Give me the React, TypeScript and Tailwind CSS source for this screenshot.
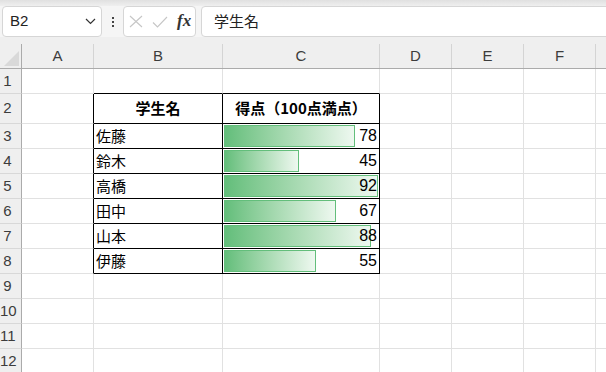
import React from "react";

const JP = "font-['Noto_Sans_CJK_JP','Noto_Sans_CJK_SC',sans-serif]";
const LS = "font-['Liberation_Sans',Arial,sans-serif]";

const data = [
  { name: "佐藤", v: 78, w: 131 },
  { name: "鈴木", v: 45, w: 75 },
  { name: "高橋", v: 92, w: 154 },
  { name: "田中", v: 67, w: 112 },
  { name: "山本", v: 88, w: 147 },
  { name: "伊藤", v: 55, w: 92 },
];

const letters = ["A", "B", "C", "D", "E", "F", ""];

function inTable(r: number, c: number) {
  return r >= 2 && r <= 8 && c >= 2 && c <= 3;
}

function CellContent({ r, c }: { r: number; c: number }) {
  if (r === 2 && c === 2)
    return (
      <div className={`h-full flex items-center justify-center font-bold text-[15px] text-black ${JP}`}>学生名</div>
    );
  if (r === 2 && c === 3)
    return (
      <div className={`h-full flex items-center justify-center font-bold text-[15px] text-black ${JP}`}>
        得点（100点満点）
      </div>
    );
  if (r >= 3 && r <= 8 && c === 2)
    return (
      <div className={`h-full flex items-center pl-[2px] text-[15px] text-black ${JP}`}>{data[r - 3].name}</div>
    );
  if (r >= 3 && r <= 8 && c === 3) {
    const d = data[r - 3];
    return (
      <div className="h-full grid">
        <div className="col-start-1 row-start-1 pl-[1px] pt-[1px]">
          <div
            className="h-[22px] border border-[#63be7b] bg-gradient-to-r from-[#63be7b] to-[#eef8f0]"
            style={{ width: d.w }}
          />
        </div>
        <div
          className={`col-start-1 row-start-1 flex items-center justify-end pr-[2px] text-[16px] text-black ${LS}`}
        >
          {d.v}
        </div>
      </div>
    );
  }
  return null;
}

export default function App() {
  const rows = Array.from({ length: 12 }, (_, i) => i + 1);
  return (
    <div className="w-[606px] h-[372px] overflow-hidden bg-white">
      {/* top strip */}
      <div className="h-[6px] bg-gradient-to-b from-[#e0e0e0] to-[#efefef]" />
      {/* formula toolbar */}
      <div className="h-[31px] w-[640px] flex bg-[#f5f5f5] pl-[2px]">
        <div className="w-[100px] h-full bg-white border border-[#d6d6d6] rounded-[4px] flex items-center justify-between pl-[7px] pr-[5px]">
          <span className={`text-[15px] text-[#222] ${LS}`}>B2</span>
          <svg width="11" height="7" viewBox="0 0 11 7" fill="none">
            <path d="M1 1 L5.5 5.5 L10 1" stroke="#333" strokeWidth="1.2" />
          </svg>
        </div>
        <div className="w-[21px] h-full flex flex-col items-center justify-center gap-[2px] pt-[1px]">
          <div className="w-[2px] h-[2px] bg-[#444]" />
          <div className="w-[2px] h-[2px] bg-[#444]" />
          <div className="w-[2px] h-[2px] bg-[#444]" />
        </div>
        <div className="w-[73px] h-full bg-white border border-[#d6d6d6] rounded-[4px] flex items-center pl-[5px] gap-[9px]">
          <svg width="14" height="13" viewBox="0 0 14 13" fill="none">
            <path d="M1 1 L13 12 M13 1 L1 12" stroke="#c6c6c6" strokeWidth="1.1" />
          </svg>
          <svg width="16" height="12" viewBox="0 0 16 12" fill="none">
            <path d="M1 6.5 L5.5 11 L15 1" stroke="#c6c6c6" strokeWidth="1.1" />
          </svg>
          <span className="font-['Liberation_Serif',serif] italic font-bold text-[17px] text-[#333] leading-none -mt-[2px]">
            fx
          </span>
        </div>
        <div className="ml-[5px] flex-1 h-full bg-white border border-[#d6d6d6] rounded-[4px] flex items-center pl-[12px]">
          <span className={`text-[15px] text-[#222] ${JP}`}>学生名</span>
        </div>
      </div>
      {/* sheet grid */}
      <div className="w-[668px] grid grid-cols-[22px_72px_129px_157px_72px_72px_72px_72px] grid-rows-[32px_25px_30px_25px_25px_25px_25px_25px_25px_25px_25px_25px_25px]">
        {/* corner */}
        <div className="bg-[#efefef] border-b border-b-[#ababab] flex">
          <div className="flex-1 flex items-end justify-end pb-[2px] pr-[1px]">
            <svg width="16" height="15" viewBox="0 0 16 15">
              <path d="M15 0 L15 15 L0 15 Z" fill="#d9d9d9" />
            </svg>
          </div>
          <div className="w-px mt-[7px] bg-[#ababab]" />
        </div>
        {letters.map((l, i) => (
          <div key={i} className="bg-[#efefef] border-b border-b-[#ababab] flex">
            <div className={`flex-1 flex items-center justify-center pt-[7px] text-[15px] text-[#3c3c3c] ${LS}`}>
              {l}
            </div>
            <div className={i < 6 ? "w-px mt-[7px] bg-[#d4d4d4]" : "w-px mt-[7px] bg-transparent"} />
          </div>
        ))}
        {rows.map((r) => (
          <React.Fragment key={r}>
            <div className="bg-[#efefef] border-r border-r-[#ababab] border-b border-b-[#d8d8d8] flex items-center">
              <span className={`w-[15px] text-center text-[15px] text-[#3c3c3c] ${LS}`}>{r}</span>
            </div>
            {[1, 2, 3, 4, 5, 6, 7].map((c) => {
              const rb = inTable(r, c) || inTable(r, c + 1);
              const bb = inTable(r, c) || inTable(r + 1, c);
              return (
                <div
                  key={c}
                  className={`border-r border-b ${rb ? "border-r-black" : "border-r-[#e1e1e1]"} ${
                    bb ? "border-b-black" : "border-b-[#e1e1e1]"
                  }`}
                >
                  <CellContent r={r} c={c} />
                </div>
              );
            })}
          </React.Fragment>
        ))}
      </div>
    </div>
  );
}
